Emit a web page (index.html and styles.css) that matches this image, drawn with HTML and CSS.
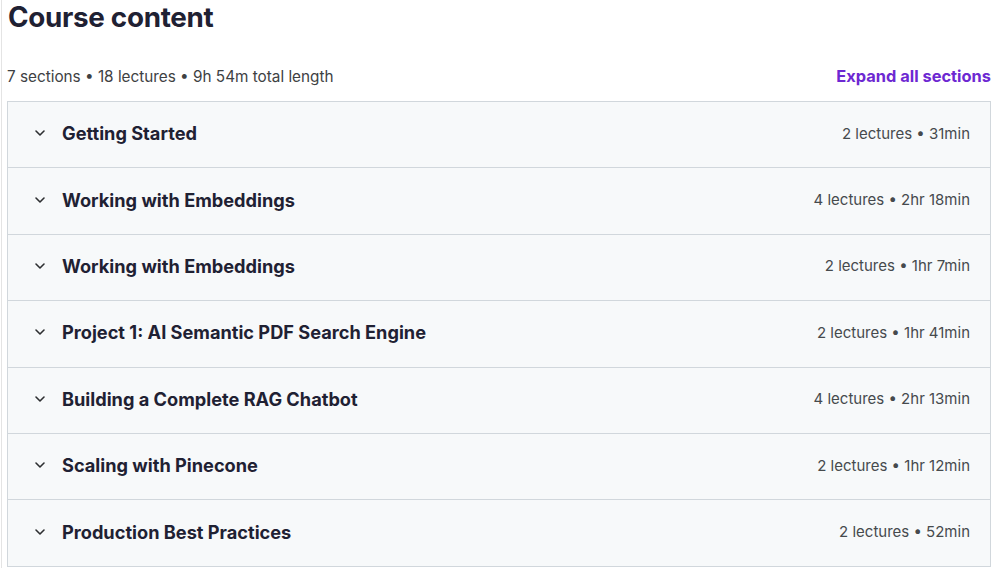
FILE: index.html
```html
<!DOCTYPE html>
<html lang="en">
<head>
    <meta charset="UTF-8">
    <meta name="viewport" content="width=device-width, initial-scale=1.0">
    <title>Course content</title>
    <link rel="stylesheet" href="styles.css">
</head>
<body>
    <div class="page">
        <h2 class="title">Course content</h2>

        <div class="summary">
            <span class="summary-text">7 sections • 18 lectures • 9h 54m total length</span>
            <button class="expand-btn">Expand all sections</button>
        </div>

        <div class="curriculum">
            <div class="section">
                <svg class="chevron" viewBox="0 0 24 24"><path d="M6 9l6 6 6-6"/></svg>
                <span class="section-title">Getting Started</span>
                <span class="section-meta">2 lectures • 31min</span>
            </div>
            <div class="section">
                <svg class="chevron" viewBox="0 0 24 24"><path d="M6 9l6 6 6-6"/></svg>
                <span class="section-title">Working with Embeddings</span>
                <span class="section-meta">4 lectures • 2hr 18min</span>
            </div>
            <div class="section">
                <svg class="chevron" viewBox="0 0 24 24"><path d="M6 9l6 6 6-6"/></svg>
                <span class="section-title">Working with Embeddings</span>
                <span class="section-meta">2 lectures • 1hr 7min</span>
            </div>
            <div class="section">
                <svg class="chevron" viewBox="0 0 24 24"><path d="M6 9l6 6 6-6"/></svg>
                <span class="section-title">Project 1: AI Semantic PDF Search Engine</span>
                <span class="section-meta">2 lectures • 1hr 41min</span>
            </div>
            <div class="section">
                <svg class="chevron" viewBox="0 0 24 24"><path d="M6 9l6 6 6-6"/></svg>
                <span class="section-title">Building a Complete RAG Chatbot</span>
                <span class="section-meta">4 lectures • 2hr 13min</span>
            </div>
            <div class="section">
                <svg class="chevron" viewBox="0 0 24 24"><path d="M6 9l6 6 6-6"/></svg>
                <span class="section-title">Scaling with Pinecone</span>
                <span class="section-meta">2 lectures • 1hr 12min</span>
            </div>
            <div class="section">
                <svg class="chevron" viewBox="0 0 24 24"><path d="M6 9l6 6 6-6"/></svg>
                <span class="section-title">Production Best Practices</span>
                <span class="section-meta">2 lectures • 52min</span>
            </div>
        </div>
    </div>
</body>
</html>
```

FILE: styles.css
```css
body {
    margin: 0;
    font-family: Inter, 'Noto Sans', sans-serif;
    color: #2d2f31;
    background-color: #fff;
}
.page {
    margin-left: 1px;
    border-left: 1px solid #e4e4e4;
    padding: 0 8px 0 5px;
    min-height: 568px;
    box-sizing: border-box;
}
.title {
    margin: 0;
    padding: 1px 0 0 1px;
    font-size: 27.8px;
    font-weight: 700;
    line-height: 33px;
    letter-spacing: -0.3px;
    color: #1f2133;
}
.summary {
    display: flex;
    justify-content: space-between;
    align-items: center;
    margin-top: 30px;
    height: 24px;
    margin-bottom: 13px;
}
.summary-text {
    font-size: 15.3px;
    color: #3e4143;
}
.expand-btn {
    background: none;
    border: none;
    padding: 0;
    font-family: inherit;
    font-size: 16.4px;
    font-weight: 700;
    color: #6d28d2;
    cursor: pointer;
}
.curriculum {
    border-top: 1px solid #d1d7dc;
}
.section {
    display: flex;
    align-items: center;
    height: 66.4px;
    box-sizing: border-box;
    padding: 0 20px 3px 24px;
    background-color: #f7f9fa;
    border: 1px solid #d1d7dc;
    border-top: none;
}
.chevron {
    width: 16px;
    height: 16px;
    fill: none;
    stroke: #2d2f31;
    stroke-width: 2.4;
    stroke-linecap: round;
    stroke-linejoin: round;
    margin-right: 14px;
}
.section-title {
    flex: 1;
    font-size: 18.2px;
    font-weight: 700;
    color: #1f2133;
}
.section-meta {
    font-size: 15px;
    color: #464a4d;
}
```
